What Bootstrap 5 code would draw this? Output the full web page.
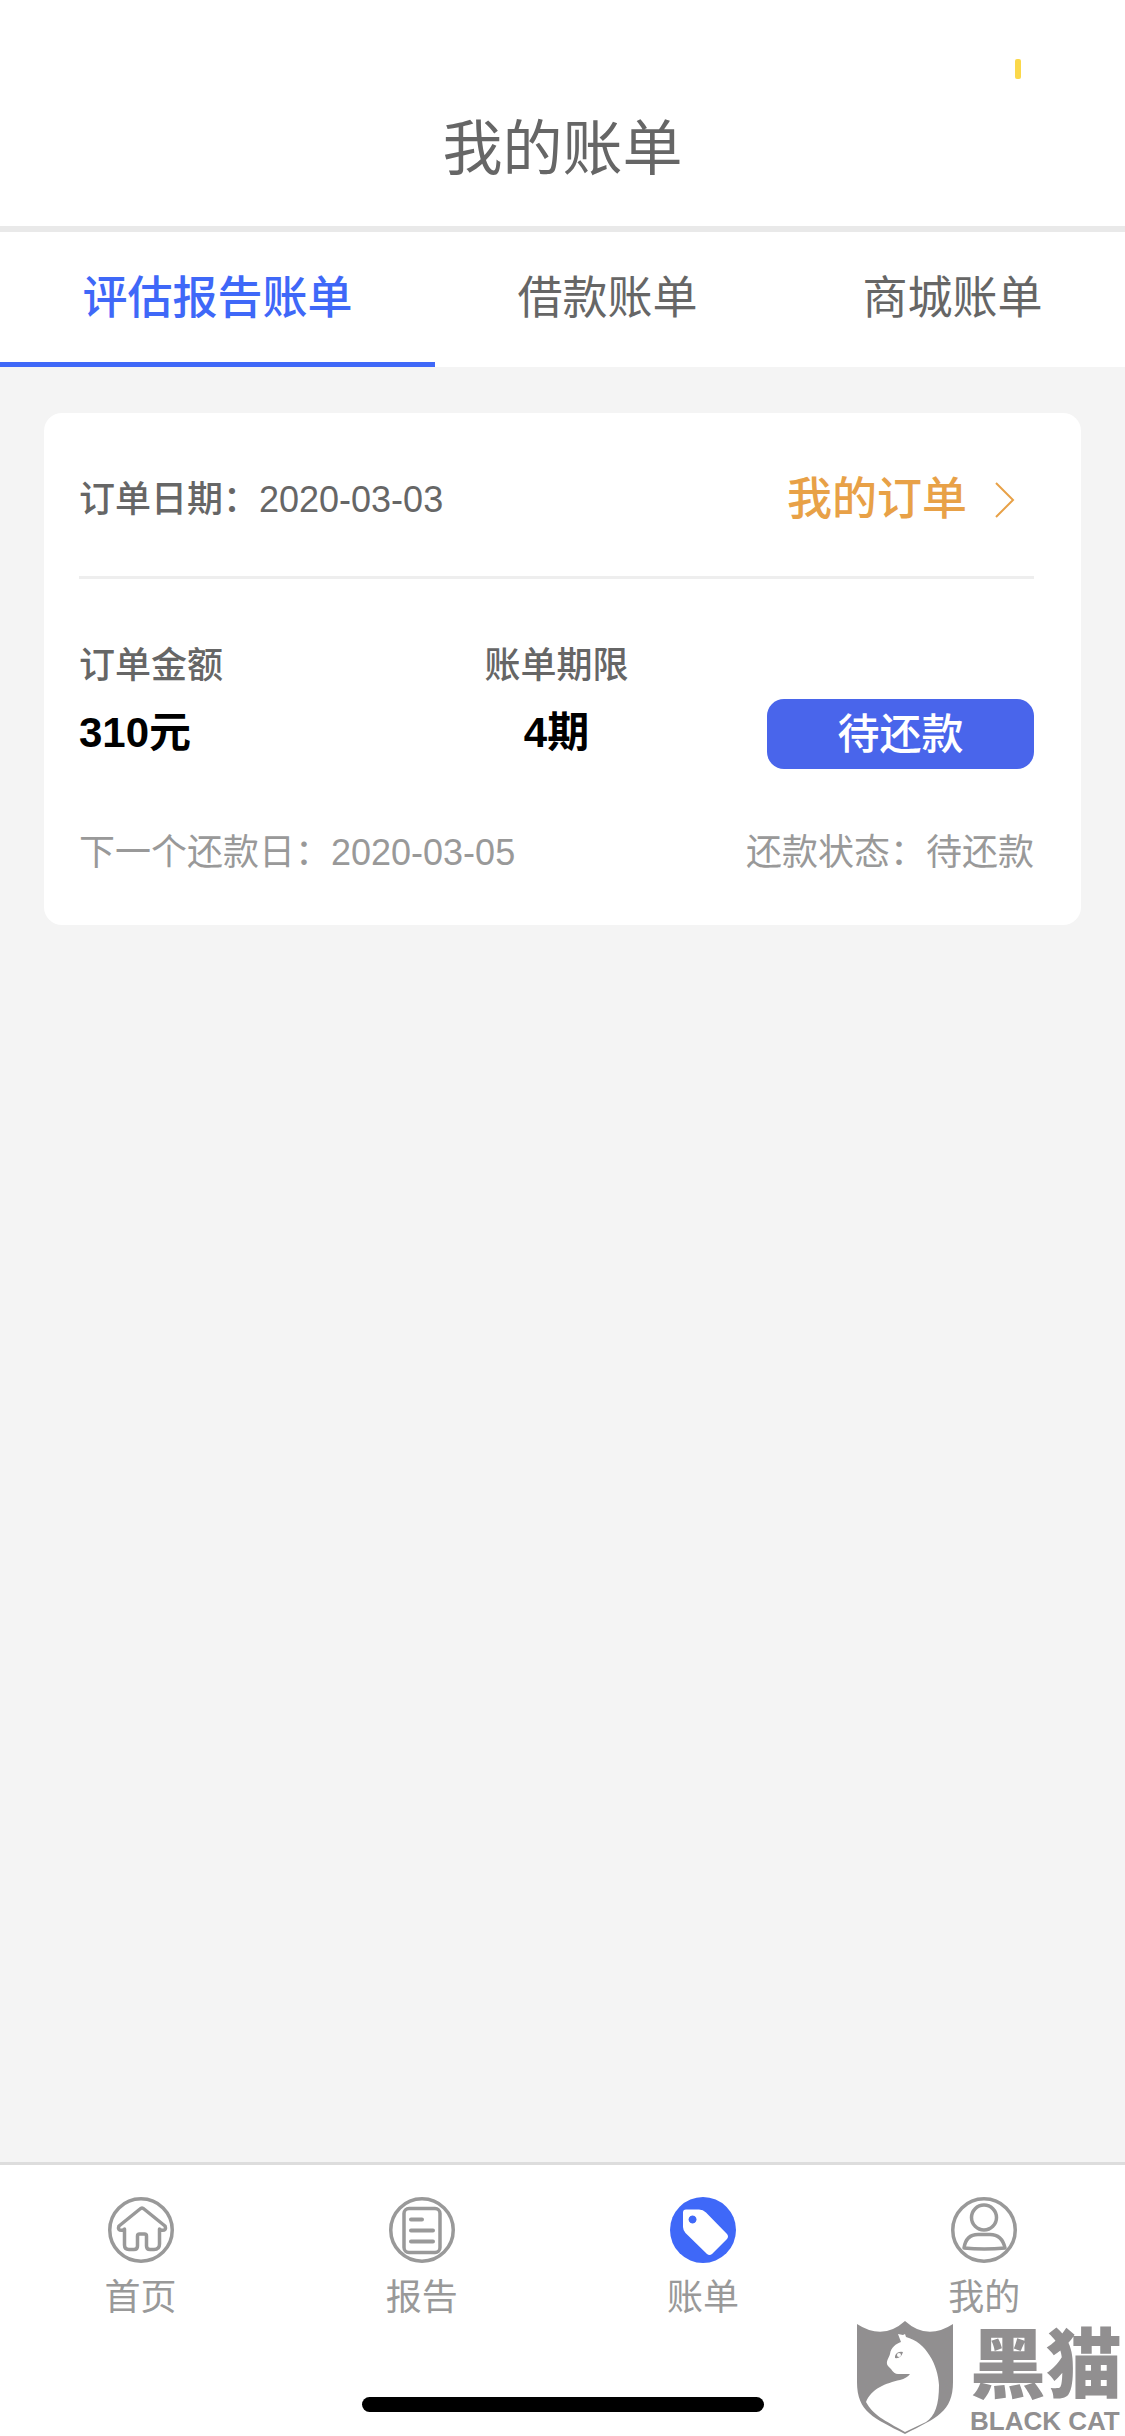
<!DOCTYPE html>
<html lang="zh-CN">
<head>
<meta charset="utf-8">
<meta name="viewport" content="width=device-width, initial-scale=1">
<title>我的账单</title>
<link href="https://cdn.jsdelivr.net/npm/bootstrap@5.3.0/dist/css/bootstrap.min.css" rel="stylesheet">
<style>
body{font-family:"Liberation Sans","Noto Sans CJK SC",sans-serif;background:#f4f4f4;color:#666;font-size:36px;line-height:54px}
a{color:inherit;text-decoration:none}
.status-strip{height:88px;padding:59px 104px 0 0}
.status-mark{width:6px;height:20px;border-radius:2px;background:#fbd84a}
.app-title{font-size:60px;line-height:90px;font-weight:400;padding:17px 0 31px}
.title-bar{border-bottom:6px solid #e9e9e9}
.bill-tabs{font-size:45px;line-height:68px}
.bill-tabs .nav-link{color:#666;border-radius:0;padding:33px 0 29px;border-bottom:5px solid transparent;background:none}
.bill-tabs .nav-item{flex:1 1 auto}
.bill-tabs .nav-link.active{color:#3f68f8;font-weight:500;background:none;border-color:#3f68f8}
.bill-card{margin:46px 44px;padding:0 47px 0 35px;border:0;border-radius:18px}
.card-top{height:166px;padding-top:10px;border-bottom:3px solid #eee;font-weight:500}
.order-link{color:#e8a147;font-size:45px;line-height:68px;gap:28px;padding-right:19px}
.bill-info{padding-top:60px}
.bill-info>div{flex:1 1 0}
.info-label{font-weight:500}
.amount{font-size:42px;line-height:80px;font-weight:700;color:#000}
.pay-btn{width:267px;height:70px;margin-bottom:4px;border-radius:17px;background:#4965eb;color:#fff;font-size:42px;line-height:66px;padding:2px 0 0;font-weight:500;border:0}
.pay-btn:hover{background:#3a55d8;color:#fff}
.card-foot{color:#999;padding:53px 0 45px}
.tab-bar{border-top:3px solid #ddd;color:#999;padding-top:32px}
.tab-bar a{gap:8px}
.tab-bar svg{width:66px;height:66px}
.home-bar{width:402px;height:15px;border-radius:8px;background:#000;margin:72px auto 24px}
.brand-logo{bottom:0;right:3px;gap:16px;color:#918f90;z-index:5;pointer-events:none}
.brand-logo svg{width:98px;height:116px}
.brand-name{font-size:76px;line-height:76px;font-weight:900;margin-bottom:2px}
.brand-latin{font-size:26px;line-height:30px;font-weight:700}
</style>
<script src="https://cdn.jsdelivr.net/npm/bootstrap@5.3.0/dist/js/bootstrap.bundle.min.js" defer></script>
</head>
<body>
<div class="d-flex flex-column min-vh-100 position-relative">
  <header class="title-bar bg-white">
    <div class="status-strip d-flex justify-content-end"><div class="status-mark"></div></div>
    <h1 class="app-title text-center m-0">我的账单</h1>
  </header>
  <nav class="bg-white">
    <ul class="nav bill-tabs text-center">
      <li class="nav-item"><a class="nav-link active" href="#" aria-current="page">评估报告账单</a></li>
      <li class="nav-item"><a class="nav-link" href="#">借款账单</a></li>
      <li class="nav-item"><a class="nav-link" href="#">商城账单</a></li>
    </ul>
  </nav>
  <main class="flex-grow-1">
    <section class="card bill-card">
      <div class="card-top d-flex align-items-center justify-content-between">
        <span>订单日期：2020-03-03</span>
        <a href="#" class="order-link d-flex align-items-center">我的订单
          <svg width="20" height="36" viewBox="0 0 20 36" fill="none" stroke="currentColor" stroke-width="2"><path d="M1 1 18 18 1 35"/></svg>
        </a>
      </div>
      <div class="bill-info d-flex align-items-end">
        <div><div class="info-label">订单金额</div><div class="amount">310元</div></div>
        <div class="text-center"><div class="info-label">账单期限</div><div class="amount">4期</div></div>
        <div class="text-end"><button type="button" class="btn pay-btn">待还款</button></div>
      </div>
      <div class="card-foot d-flex justify-content-between">
        <span>下一个还款日：2020-03-05</span>
        <span>还款状态：待还款</span>
      </div>
    </section>
  </main>
  <footer class="tab-bar bg-white">
    <nav class="row g-0 text-center">
      <a href="#" class="col d-flex flex-column align-items-center">
        <svg viewBox="0 0 66 66" fill="none" stroke="currentColor" stroke-width="3.5" stroke-linejoin="round" stroke-linecap="round"><circle cx="33" cy="33" r="31.250"/><path d="M16.500 32V48Q16.500 52.500 21 52.500H26Q29.500 52.500 29.500 49V39Q29.500 37 31.500 37H36.500Q38.500 37 38.500 39V49Q38.500 52.500 42 52.500H46Q51.500 52.500 51.500 47V32M15 33Q9 34 11 29L32 12Q34 10 36 12L57 29Q59 34 53 33"/></svg>
        首页</a>
      <a href="#" class="col d-flex flex-column align-items-center">
        <svg viewBox="0 0 66 66" fill="none" stroke="currentColor" stroke-width="3.5" stroke-linecap="round"><circle cx="33" cy="33" r="31.250"/><rect x="15" y="11.500" width="36" height="44" rx="5"/><path d="M22 22.500H33M22 33.500H44M22 44.500H44" stroke-width="4"/></svg>
        报告</a>
      <a href="#" class="col d-flex flex-column align-items-center">
        <svg viewBox="0 0 66 66"><circle cx="33" cy="33" r="33" fill="#3f68f8"/><path fill="#fff" fill-rule="evenodd" d="M16 12.500H29Q33 12.500 36 15.500L57 37Q59 39.500 57 42L42 57Q39.500 59 37 57L15.500 36Q13 33 13 30V15.500Q13 12.500 16 12.500ZM22.500 18.500a4 4 0 1 0 .1 0Z"/></svg>
        账单</a>
      <a href="#" class="col d-flex flex-column align-items-center">
        <svg viewBox="0 0 66 66" fill="none" stroke="currentColor" stroke-width="3.5" stroke-linejoin="round"><circle cx="33" cy="33" r="31.250"/><circle cx="33" cy="20.500" r="12.500"/><path d="M13 51Q15 37.500 27 37.500H39Q51 37.500 54 51Q33 53 13 51Z"/></svg>
        我的</a>
    </nav>
    <div class="home-bar"></div>
  </footer>
  <div class="brand-logo position-absolute d-flex align-items-end">
    <svg viewBox="0 0 98 116" fill="currentColor"><path d="M1 4Q27 21 49 1Q71 21 97 4V62C97 92 80 98 49 114C18 98 1 92 1 62Z"/><path fill="#fff" d="M10 82C15 69 30 63 44 60Q51 58 54 54H42Q38 54 35 49L32 46C29 42 33 38 34 34C35 27 40 24 45 22L42 14 47 15 49 14 50 17C70 22 82 45 83 65C83 85 79 96 70 102L49 112C28 100 17 95 10 82Z"/><path d="M39 36Q41 31 47 32Q45 39 39 38Z"/><circle cx="43" cy="35" r="2" fill="#fff"/></svg>
    <div><div class="brand-name">黑猫</div><div class="brand-latin">BLACK CAT</div></div>
  </div>
</div>
</body>
</html>
